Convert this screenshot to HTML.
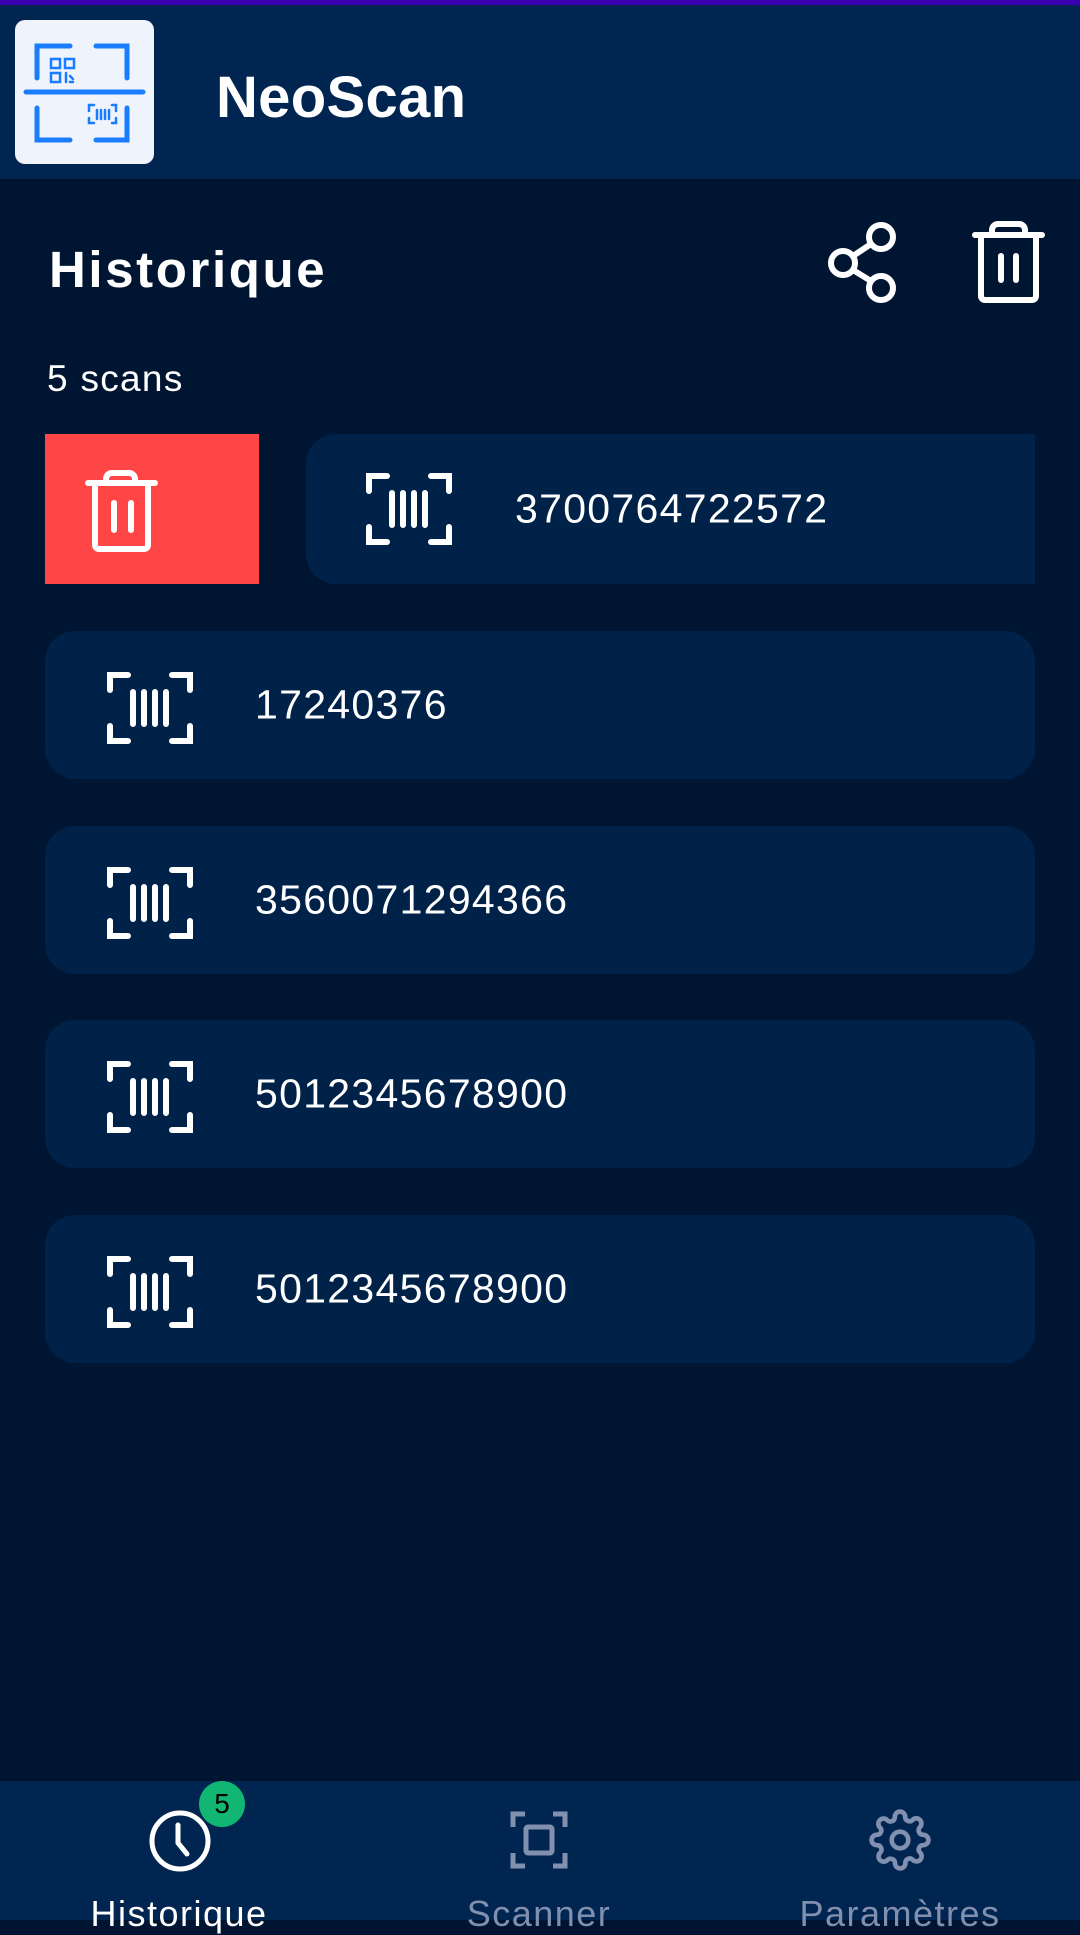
<!DOCTYPE html>
<html><head><meta charset="utf-8"><style>
*{margin:0;padding:0;box-sizing:border-box}
body{width:1080px;height:1920px;background:#001531;font-family:"Liberation Sans",Roboto,sans-serif;color:#fff;position:relative;overflow:hidden}
.abs{position:absolute}
.card{position:absolute;left:45px;width:990px;height:148px;background:#002249;border-radius:30px}
.num{position:absolute;font-size:41px;top:50%;transform:translateY(-50%);letter-spacing:1.3px}
.bc{position:absolute;top:41px;width:86px;height:72px}
</style></head><body>
<div class="abs" style="left:0;top:0;width:1080px;height:5px;background:#3a00b0"></div>
<div class="abs" style="left:0;top:5px;width:1080px;height:174px;background:#012551"></div>
<div class="abs" style="left:15px;top:20px;width:139px;height:144px;background:#eff3fb;border-radius:10px">
<svg width="139" height="144" viewBox="0 0 139 144" fill="none" stroke="#1a7cff" stroke-width="5" stroke-linecap="round">
<path d="M22 58V26H55M81 26H112V58M22 88V120H55M81 120H112V88"/>
<path d="M11 72H128" stroke-width="5"/>
<g stroke-width="2.5"><rect x="36" y="39" width="9" height="9"/><rect x="50" y="39" width="9" height="9"/><rect x="36" y="53" width="9" height="9"/><path d="M51 53v9M55 56l3 3M55 62h3"/></g>
<g stroke-width="2.5"><path d="M74 91v-6h5M97 85h4v6M74 98v5h5M97 103h4v-5M82 90v9M86 90v9M90 90v9M94 90v9"/></g>
</svg></div>
<div class="abs" style="left:216px;top:64px;font-size:58px;font-weight:bold;letter-spacing:0.3px">NeoScan</div>
<div class="abs" style="left:49px;top:240px;font-size:51px;font-weight:bold;letter-spacing:2.6px">Historique</div>
<svg class="abs" style="left:820px;top:218px" width="84" height="88" viewBox="0 0 84 88" fill="none" stroke="#fff" stroke-width="6"><circle cx="61" cy="19" r="12"/><circle cx="23" cy="45" r="12"/><circle cx="61" cy="70" r="12"/><path d="M33 38l18-12M33 52l18 11"/></svg>
<svg class="abs" style="left:972px;top:220px" width="76" height="86" viewBox="0 0 76 86" fill="none" stroke="#fff" stroke-width="6" stroke-linecap="round" stroke-linejoin="round"><path d="M3 15H70M20 15V10a6 6 0 0 1 6-6h21a6 6 0 0 1 6 6v5M9 15v61a4 4 0 0 0 4 4h47a4 4 0 0 0 4-4V15M29 36v24M44 36v24"/></svg>
<div class="abs" style="left:47px;top:358px;font-size:37px;letter-spacing:1.3px">5 scans</div>
<div class="abs" style="left:45px;top:434px;width:214px;height:150px;background:#ff4646">
<svg class="abs" style="left:38px;top:36px" width="76" height="84" viewBox="0 0 76 84" fill="none" stroke="#fff" stroke-width="6" stroke-linecap="round" stroke-linejoin="round"><path d="M5 13H72M23 13V9a6 6 0 0 1 6-6h17a6 6 0 0 1 6 6v4M12 15v60a4 4 0 0 0 4 4h45a4 4 0 0 0 4-4V15M31 33v27M48 33v27"/></svg></div>
<div class="abs" style="left:306px;top:434px;width:729px;height:150px;background:#002249;border-radius:30px 0 0 30px">
<svg class="bc" style="left:60px;top:39px" width="86" height="72" viewBox="0 0 86 72" fill="none" stroke="#fff" stroke-width="6" stroke-linecap="round"><path d="M3 18V3h18M65 3h18v15M3 54v15h18M65 69h18V54M26 20v32M37 20v32M48 20v32M59 20v32"/></svg>
<div class="num" style="left:209px">3700764722572</div></div>
<div class="card" style="top:631px"><svg class="bc" style="left:62px" width="86" height="72" viewBox="0 0 86 72" fill="none" stroke="#fff" stroke-width="6" stroke-linecap="round"><path d="M3 18V3h18M65 3h18v15M3 54v15h18M65 69h18V54M26 20v32M37 20v32M48 20v32M59 20v32"/></svg><div class="num" style="left:210px">17240376</div></div>
<div class="card" style="top:826px"><svg class="bc" style="left:62px" width="86" height="72" viewBox="0 0 86 72" fill="none" stroke="#fff" stroke-width="6" stroke-linecap="round"><path d="M3 18V3h18M65 3h18v15M3 54v15h18M65 69h18V54M26 20v32M37 20v32M48 20v32M59 20v32"/></svg><div class="num" style="left:210px">3560071294366</div></div>
<div class="card" style="top:1020px"><svg class="bc" style="left:62px" width="86" height="72" viewBox="0 0 86 72" fill="none" stroke="#fff" stroke-width="6" stroke-linecap="round"><path d="M3 18V3h18M65 3h18v15M3 54v15h18M65 69h18V54M26 20v32M37 20v32M48 20v32M59 20v32"/></svg><div class="num" style="left:210px">5012345678900</div></div>
<div class="card" style="top:1215px"><svg class="bc" style="left:62px" width="86" height="72" viewBox="0 0 86 72" fill="none" stroke="#fff" stroke-width="6" stroke-linecap="round"><path d="M3 18V3h18M65 3h18v15M3 54v15h18M65 69h18V54M26 20v32M37 20v32M48 20v32M59 20v32"/></svg><div class="num" style="left:210px">5012345678900</div></div>
<div class="abs" style="left:0;top:1781px;width:1080px;height:139px;background:#012551"></div>
<svg class="abs" style="left:148px;top:1809px" width="64" height="64" viewBox="0 0 64 64" fill="none" stroke="#fff" stroke-width="5" stroke-linecap="round"><circle cx="32" cy="32" r="28"/><path d="M30 16v18l9 11"/></svg>
<div class="abs" style="left:199px;top:1781px;width:46px;height:46px;border-radius:50%;background:#11b673;color:#000;font-size:28px;text-align:center;line-height:46px">5</div>
<svg class="abs" style="left:510px;top:1811px" width="58" height="58" viewBox="0 0 58 58" fill="none" stroke="#8290b0" stroke-width="5"><path d="M3 16V3h12M43 3h12v13M3 42v13h12M43 55h12V42"/><rect x="16" y="16" width="26" height="26" rx="2"/></svg>
<svg class="abs" style="left:869px;top:1808px" width="62" height="64" viewBox="0 0 24 24" fill="none" stroke="#8290b0" stroke-width="1.8" stroke-linejoin="round"><circle cx="12" cy="12" r="3.2"/><path d="M19.4 15a1.65 1.65 0 0 0 .33 1.82l.06.06a2 2 0 1 1-2.83 2.83l-.06-.06a1.65 1.65 0 0 0-1.820-.33 1.65 1.65 0 0 0-1 1.51V21a2 2 0 1 1-4 0v-.09A1.65 1.65 0 0 0 9 19.4a1.65 1.65 0 0 0-1.82.33l-.06.06a2 2 0 1 1-2.830-2.83l.06-.06A1.65 1.65 0 0 0 4.68 15a1.65 1.65 0 0 0-1.51-1H3a2 2 0 1 1 0-4h.09A1.65 1.65 0 0 0 4.6 9a1.65 1.65 0 0 0-.33-1.82l-.06-.06a2 2 0 1 1 2.83-2.83l.06.06A1.65 1.65 0 0 0 9 4.68 1.65 1.65 0 0 0 10 3.17V3a2 2 0 1 1 4 0v.09a1.65 1.65 0 0 0 1 1.51 1.65 1.65 0 0 0 1.82-.33l.06-.06a2 2 0 1 1 2.83 2.830l-.06.06A1.65 1.65 0 0 0 19.4 9a1.65 1.65 0 0 0 1.51 1H21a2 2 0 1 1 0 4h-.09a1.65 1.65 0 0 0-1.51 1z"/></svg>
<div class="abs" style="left:39px;width:280px;top:1893px;text-align:center;font-size:36px;letter-spacing:1.5px;color:#fff">Historique</div>
<div class="abs" style="left:399px;width:280px;top:1893px;text-align:center;font-size:36px;letter-spacing:1.5px;color:#8290b0">Scanner</div>
<div class="abs" style="left:760px;width:280px;top:1893px;text-align:center;font-size:36px;letter-spacing:1.5px;color:#8290b0">Paramètres</div>
</body></html>
